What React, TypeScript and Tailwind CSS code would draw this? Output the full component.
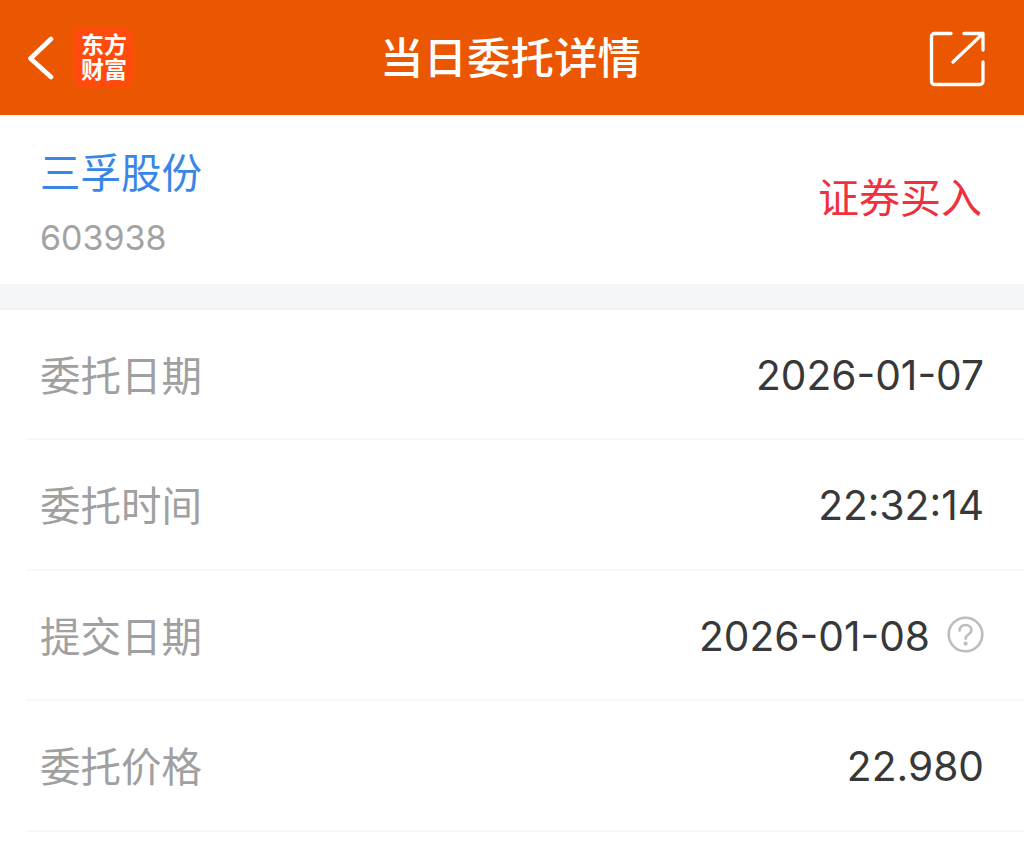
const font = "font-['Inter','Noto_Sans_CJK_SC',sans-serif]";

function Row({ label, value, help }: { label: string; value: string; help?: boolean }) {
  return (
    <div className="ml-[26px] flex h-[130.4px] items-center justify-between border-b-2 border-[#f7f8f9] pl-[14px] pr-[40px]">
      <span className="text-[40.5px] leading-none font-normal text-[#a0a0a0]">{label}</span>
      <span className="flex items-center gap-[17px]">
        <span className={`pt-[4px] text-[40.7px] leading-none text-[#383838] ${font}`}>{value}</span>
        {help && (
          <svg width="37" height="37" viewBox="0 0 37 37" fill="none" stroke="#bdbdbd" strokeWidth="2.6" strokeLinecap="round">
            <circle cx="18.5" cy="18.5" r="16.8" />
            <path d="M12.6 14.6c0-3.4 2.6-5.6 6-5.6s5.8 2.2 5.8 5c0 2.2-1.2 3.3-3 4.5-1.9 1.2-2.8 2.2-2.8 4.2" />
            <circle cx="18.6" cy="27.6" r="0.8" fill="#bdbdbd" />
          </svg>
        )}
      </span>
    </div>
  );
}

export default function App() {
  return (
    <div className="h-[848px] w-[1024px] overflow-hidden bg-white font-['Noto_Sans_CJK_SC',sans-serif]">
      <header className="flex h-[115px] items-center bg-[#eb5600]">
        <div className="flex flex-1 items-center gap-[19px] pl-[27px]">
          <svg width="27" height="46" viewBox="0 0 27 46" fill="none" stroke="#ffffff" strokeWidth="4.6" strokeLinecap="round" strokeLinejoin="round">
            <path d="M24 4 3.5 23.5 24 42" />
          </svg>
          <div className="flex h-[61px] w-[60px] items-center justify-center rounded-[10px] bg-[#ff4c0d] pb-[4px] pl-[2px]">
            <span className="w-[46px] text-center text-[23px] font-bold leading-[25px] text-white">东方财富</span>
          </div>
        </div>
        <h1 className="ml-[8px] pb-[3px] text-[43.5px] leading-none font-medium text-white">当日委托详情</h1>
        <div className="flex flex-1 justify-end pr-[38px]">
          <svg width="58" height="58" viewBox="0 0 58 58" fill="none" stroke="#ffffff" strokeWidth="3.3" strokeLinecap="round" strokeLinejoin="round">
            <path d="M23 4.5H6.5a3 3 0 0 0-3 3v45a3 3 0 0 0 3 3H52a3 3 0 0 0 3-3V33" />
            <path d="M25 33 55 4.5M36 4.5h19V21" />
          </svg>
        </div>
      </header>
      <section className="flex h-[169px] items-center justify-between pl-[40px] pr-[42px]">
        <div className="flex flex-col gap-[22px] pt-[5px]">
          <span className="text-[40.5px] leading-[50px] font-normal text-[#3a86e8]">三孚股份</span>
          <span className={`text-[34px] leading-[40px] text-[#a3a3a3] ${font}`}>603938</span>
        </div>
        <span className="pb-[8px] text-[41px] leading-none text-[#f0303c]">证券买入</span>
      </section>
      <div className="h-[26px] border-b-2 border-[#eff0f2] bg-[#f5f6f8]" />
      <Row label="委托日期" value="2026-01-07" />
      <Row label="委托时间" value="22:32:14" />
      <Row label="提交日期" value="2026-01-08" help />
      <Row label="委托价格" value="22.980" />
    </div>
  );
}
